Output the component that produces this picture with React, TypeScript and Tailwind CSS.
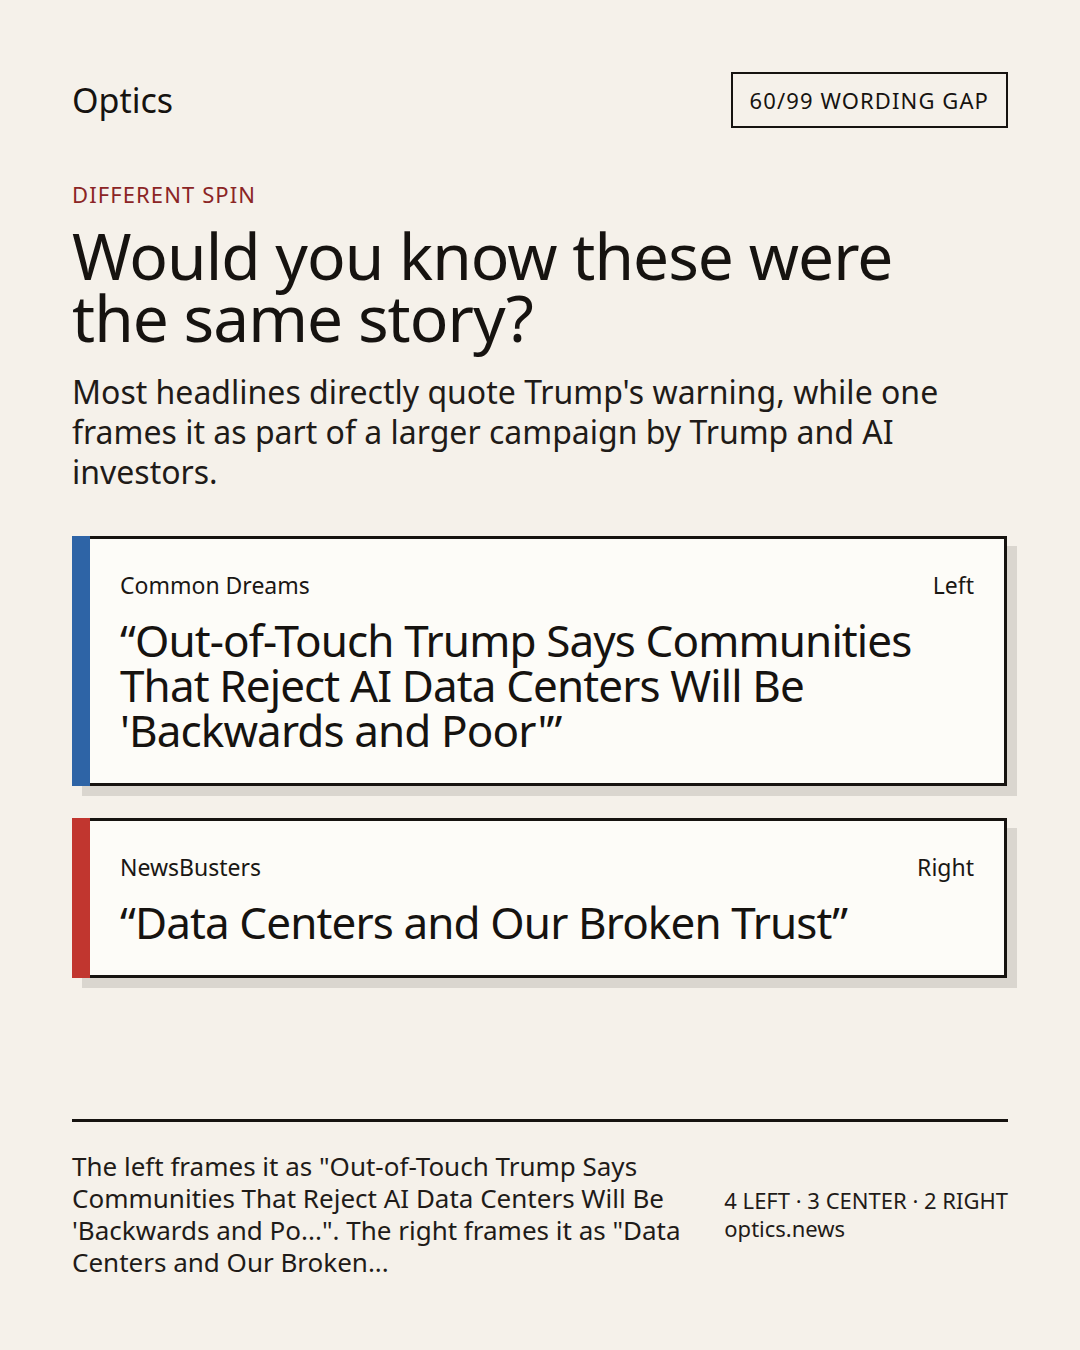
import React from "react";

const font = { fontFamily: '"Noto Sans", "Open Sans", sans-serif' };

function Card({
  color,
  source,
  lean,
  headline,
}: {
  color: string;
  source: string;
  lean: string;
  headline: string;
}) {
  return (
    <div className="flex shadow-[10px_10px_0_0_#dad6cf]">
      <div className={`w-[18px] shrink-0 ${color}`} />
      <div className="flex-1 bg-[#fdfcf8] border-t-[3px] border-b-[3px] border-r-[3px] border-[#161310] pl-[30px] pr-[30px] pt-[30px] pb-[30px]">
        <div className="flex justify-between text-[23px] leading-[32px] text-[#1a1714]">
          <span>{source}</span>
          <span>{lean}</span>
        </div>
        <div className="mt-[17px] text-[44px] leading-[45px] tracking-[-0.02em] text-[#161310]">
          {headline}
        </div>
      </div>
    </div>
  );
}

export default function App() {
  return (
    <div
      style={font}
      className="w-[1080px] h-[1350px] bg-[#f5f1ea] p-[72px] flex flex-col text-[#161310]"
    >
      <div className="flex items-center justify-between h-[56px]">
        <div className="text-[34px] leading-[44px]">Optics</div>
        <div className="h-[56px] border-2 border-[#161310] px-[17px] flex items-center text-[22px] tracking-[0.05em]">
          60/99 WORDING GAP
        </div>
      </div>

      <div className="mt-[52px] text-[22px] leading-[28px] tracking-[0.05em] text-[#8b2525]">
        DIFFERENT SPIN
      </div>

      <h1 className="mt-[17px] max-w-[900px] text-[64px] leading-[62px] tracking-[-0.015em]">
        Would you know these were the same story?
      </h1>

      <p className="mt-[23px] text-[32px] leading-[40px] text-[#1f1b18]">
        Most headlines directly quote Trump's warning, while one frames it as
        part of a larger campaign by Trump and AI investors.
      </p>

      <div className="mt-[44px] flex flex-col gap-[32px] mr-[1px]">
        <Card
          color="bg-[#2e64a6]"
          source="Common Dreams"
          lean="Left"
          headline={"\u201COut-of-Touch Trump Says Communities That Reject AI Data Centers Will Be 'Backwards and Poor'\u201D"}
        />
        <Card
          color="bg-[#c1362f]"
          source="NewsBusters"
          lean="Right"
          headline={"\u201CData Centers and Our Broken Trust\u201D"}
        />
      </div>

      <div className="mt-auto border-t-[3px] border-[#161310] pt-[28px] flex items-center gap-[40px]">
        <div className="flex-1 text-[26px] leading-[32px] text-[#1f1b18]">
          The left frames it as "Out-of-Touch Trump Says Communities That Reject
          AI Data Centers Will Be 'Backwards and Po...". The right frames it as
          "Data Centers and Our Broken...
        </div>
        <div className="shrink-0 text-[22px] leading-[28px] text-[#1f1b18]">
          <div>4 LEFT · 3 CENTER · 2 RIGHT</div>
          <div>optics.news</div>
        </div>
      </div>
    </div>
  );
}
